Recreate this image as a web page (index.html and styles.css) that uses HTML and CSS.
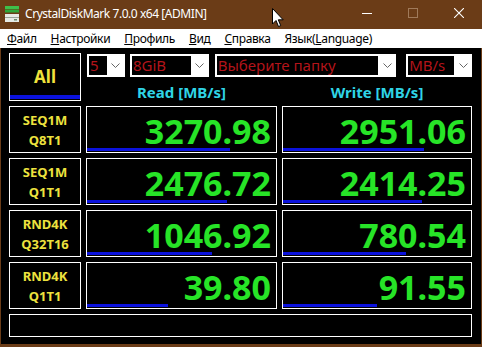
FILE: index.html
```html
<!DOCTYPE html>
<html lang="ru">
<head>
    <meta charset="UTF-8">
    <title>CrystalDiskMark 7.0.0 x64 [ADMIN]</title>
    <link rel="stylesheet" href="styles.css">
</head>
<body>
    <div class="window">
        <!-- Title bar -->
        <div class="titlebar">
            <svg class="app-icon" width="14" height="16" viewBox="0 0 14 16">
                <rect x="0" y="0" width="14" height="3" fill="#3fbf4a"/>
                <rect x="0" y="3.5" width="14" height="3" fill="#2ea83a"/>
                <rect x="0" y="8" width="14" height="8" fill="#e6ebe6"/>
                <rect x="0" y="11" width="14" height="1" fill="#9aa59a"/>
                <rect x="9" y="13" width="3" height="1.5" fill="#6a8a6a"/>
            </svg>
            <span class="title">CrystalDiskMark 7.0.0 x64 [ADMIN]</span>
            <div class="controls">
                <span class="ctl">
                    <svg width="10" height="10" viewBox="0 0 10 10"><line x1="0" y1="5.5" x2="10" y2="5.5" stroke="#fff" stroke-width="1"/></svg>
                </span>
                <span class="ctl">
                    <svg width="10" height="10" viewBox="0 0 10 10"><rect x="0.5" y="0.5" width="9" height="9" fill="none" stroke="#a07a5a" stroke-width="1"/></svg>
                </span>
                <span class="ctl">
                    <svg width="10" height="10" viewBox="0 0 10 10"><path d="M0 0 L10 10 M10 0 L0 10" stroke="#fff" stroke-width="1.1"/></svg>
                </span>
            </div>
            <svg class="cursor" width="13" height="20" viewBox="0 0 13 20">
                <path d="M0.5 0.5 L0.5 16 L4 12.5 L6.5 18.5 L8.7 17.6 L6.3 11.8 L11.2 11.8 Z" fill="#fff" stroke="#000" stroke-width="1"/>
            </svg>
        </div>

        <!-- Menu -->
        <div class="menubar">
            <span class="menu-item"><u>Ф</u>айл</span>
            <span class="menu-item"><u>Н</u>астройки</span>
            <span class="menu-item"><u>П</u>рофиль</span>
            <span class="menu-item"><u>В</u>ид</span>
            <span class="menu-item"><u>С</u>правка</span>
            <span class="menu-item">Язык(<u>L</u>anguage)</span>
        </div>

        <div class="main">
            <div class="grid">
                <div class="all-btn">
                    <span class="all-text">All</span>
                    <div class="all-bar"></div>
                </div>

                <div class="selects">
                    <div class="select s-count">
                        <span class="sel-value">5</span>
                        <span class="sel-arrow"><svg width="9" height="5" viewBox="0 0 9 5"><polyline points="0.5,0.5 4.5,4.5 8.5,0.5" fill="none" stroke="#666" stroke-width="1"/></svg></span>
                    </div>
                    <div class="select s-size">
                        <span class="sel-value">8GiB</span>
                        <span class="sel-arrow"><svg width="9" height="5" viewBox="0 0 9 5"><polyline points="0.5,0.5 4.5,4.5 8.5,0.5" fill="none" stroke="#666" stroke-width="1"/></svg></span>
                    </div>
                    <div class="select s-folder">
                        <span class="sel-value">Выберите папку</span>
                        <span class="sel-arrow"><svg width="9" height="5" viewBox="0 0 9 5"><polyline points="0.5,0.5 4.5,4.5 8.5,0.5" fill="none" stroke="#666" stroke-width="1"/></svg></span>
                    </div>
                    <div class="select s-unit">
                        <span class="sel-value">MB/s</span>
                        <span class="sel-arrow"><svg width="9" height="5" viewBox="0 0 9 5"><polyline points="0.5,0.5 4.5,4.5 8.5,0.5" fill="none" stroke="#666" stroke-width="1"/></svg></span>
                    </div>
                </div>

                <div class="col-head">Read [MB/s]</div>
                <div class="col-head">Write [MB/s]</div>

                <!-- SEQ1M Q8T1 -->
                <div class="label">SEQ1M<br>Q8T1</div>
                <div class="value"><span class="num">3270.98</span><div class="bar" style="width:143px"></div></div>
                <div class="value"><span class="num">2951.06</span><div class="bar" style="width:141px"></div></div>

                <!-- SEQ1M Q1T1 -->
                <div class="label">SEQ1M<br>Q1T1</div>
                <div class="value"><span class="num">2476.72</span><div class="bar" style="width:140px"></div></div>
                <div class="value"><span class="num">2414.25</span><div class="bar" style="width:139px"></div></div>

                <!-- RND4K Q32T16 -->
                <div class="label">RND4K<br>Q32T16</div>
                <div class="value"><span class="num">1046.92</span><div class="bar" style="width:125px"></div></div>
                <div class="value"><span class="num">780.54</span><div class="bar" style="width:123px"></div></div>

                <!-- RND4K Q1T1 -->
                <div class="label">RND4K<br>Q1T1</div>
                <div class="value"><span class="num">39.80</span><div class="bar" style="width:81px"></div></div>
                <div class="value"><span class="num">91.55</span><div class="bar" style="width:94px"></div></div>

                <div class="message"></div>
            </div>
        </div>
    </div>
</body>
</html>
```

FILE: styles.css
```css
body {
    margin: 0;
    padding: 0;
    background-color: #000;
    font-family: "Noto Sans", "Open Sans", sans-serif;
}

.window {
    width: 482px;
    height: 347px;
    background-color: #6b3c17;
    overflow: hidden;
}

/* Title bar */
.titlebar {
    height: 29px;
    display: flex;
    align-items: center;
    position: relative;
    color: #fff;
}

.app-icon {
    margin-left: 5px;
    margin-right: 6px;
    margin-top: -2px;
}

.title {
    font-size: 12px;
    letter-spacing: -0.45px;
    margin-top: -3px;
}

.controls {
    margin-left: auto;
    display: flex;
    height: 29px;
}

.ctl {
    width: 46px;
    display: flex;
    align-items: center;
    justify-content: center;
    margin-top: -3px;
}

.cursor {
    position: absolute;
    left: 272px;
    top: 8px;
}

/* Menu */
.menubar {
    height: 19px;
    background-color: #fff;
    display: flex;
    align-items: center;
    font-size: 12px;
    letter-spacing: -0.35px;
    color: #000;
}

.menu-item {
    padding: 0 7px;
}

/* Main panel */
.main {
    background-color: #000;
    margin: 0 1px;
    padding: 5px 8px 7px 8px;
    height: 284px;
}

.grid {
    display: grid;
    grid-template-columns: 72px 191px 190px;
    grid-template-rows: 25px 18px repeat(4, 47px) 23px;
    column-gap: 5px;
    row-gap: 5px;
}

.all-btn {
    grid-row: 1 / 3;
    border: 1px solid #fff;
    display: flex;
    flex-direction: column;
    align-items: center;
}

.all-text {
    flex: 1;
    display: flex;
    align-items: center;
    color: #f0e23c;
    font-weight: bold;
    font-size: 17px;
    padding-top: 3px;
}

.all-bar {
    width: 100%;
    height: 4px;
    background-color: #0b12dc;
    margin-bottom: 1px;
}

.selects {
    grid-column: 2 / 4;
    display: flex;
    align-items: center;
}

.select {
    height: 23px;
    background-color: #fff;
    box-sizing: border-box;
    padding: 2px 0 2px 2px;
    display: flex;
    margin-right: 5px;
}

.s-count { width: 38px; margin-left: 1px; }
.s-size { width: 79px; margin-right: 6px; }
.s-folder { width: 182px; margin-right: 10px; }
.s-unit { width: 66px; margin-right: 0; }

.sel-value {
    flex: 1;
    background-color: #000;
    color: #b3141a;
    font-size: 15px;
    line-height: 19px;
    padding-left: 1px;
    overflow: hidden;
    white-space: nowrap;
}

.sel-arrow {
    width: 18px;
    display: flex;
    align-items: center;
    justify-content: center;
}

.col-head {
    color: #2fd4e6;
    font-weight: bold;
    font-size: 15px;
    line-height: 18px;
    text-align: center;
}

.label {
    border: 1px solid #fff;
    color: #ede23e;
    font-weight: bold;
    font-size: 13px;
    line-height: 20px;
    display: flex;
    flex-direction: column;
    justify-content: center;
    text-align: center;
}

.value {
    border: 1px solid #fff;
    display: flex;
    flex-direction: column;
}

.num {
    color: #27e427;
    font-weight: bold;
    font-size: 34px;
    line-height: 34px;
    text-align: right;
    padding-top: 7px;
    padding-right: 5px;
}

.bar {
    height: 4px;
    background-color: #0b12dc;
    margin-top: auto;
    margin-bottom: 1px;
}

.message {
    grid-column: 1 / 4;
    border: 1px solid #fff;
}
```
